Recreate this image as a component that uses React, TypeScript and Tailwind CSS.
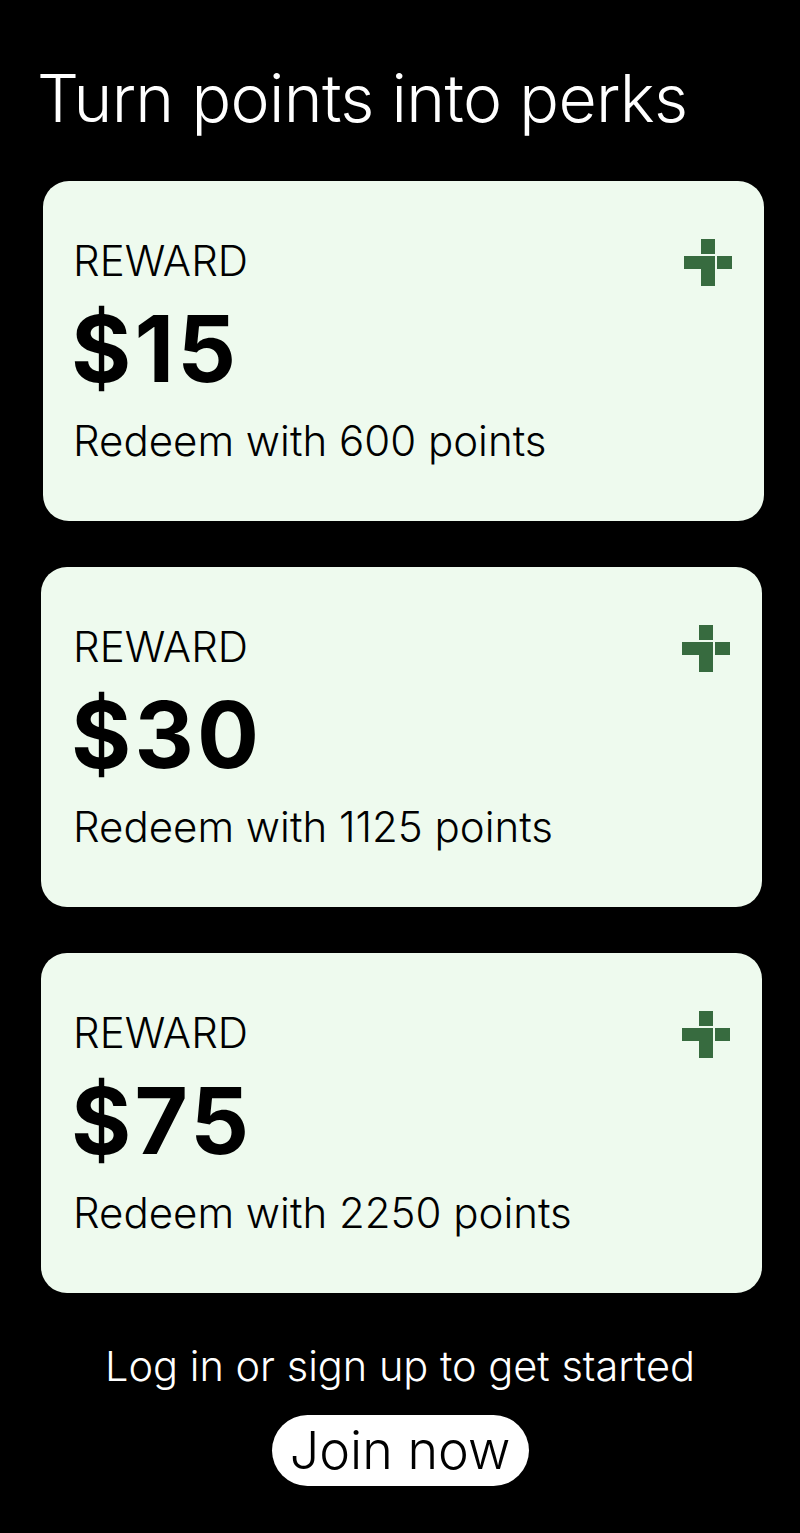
import React from "react";

const rewards = [
  { amount: "$15", points: 600, shift: "translate-x-[2px] pl-[30px]" },
  { amount: "$30", points: 1125, shift: "pl-[32px]" },
  { amount: "$75", points: 2250, shift: "pl-[32px]" },
];

function PixelPlus({ className = "" }: { className?: string }) {
  return (
    <svg viewBox="0 0 48 47" className={className} aria-hidden="true">
      <g fill="#376b3f">
        <rect x="17" y="0" width="14" height="15" />
        <rect x="0" y="17" width="31" height="13" />
        <rect x="33" y="17" width="15" height="13" />
        <rect x="17" y="30" width="14" height="17" />
      </g>
    </svg>
  );
}

function RewardCard({ amount, points, shift }: { amount: string; points: number; shift: string }) {
  return (
    <div className={`flex h-[340px] w-[721px] items-start justify-between rounded-[26px] bg-[#eefaee] pr-[32px] pt-[56px] ${shift}`}>
      <div className="flex flex-col">
        <span className="text-[42px] font-light leading-[48px] text-black">REWARD</span>
        <span className="ml-[-2px] mt-[18px] text-[92px] font-bold leading-[92px] tracking-[0.035em] text-black">
          {amount}
        </span>
        <span className="mt-[22px] text-[42px] font-light leading-[48px] text-black">
          Redeem with {points} points
        </span>
      </div>
      <PixelPlus className="mt-[2px] h-[47px] w-[48px]" />
    </div>
  );
}

export default function App() {
  return (
    <div
      className="min-h-[1533px] w-full bg-black"
      style={{ fontFamily: "Inter, 'Noto Sans', sans-serif" }}
    >
      <div className="flex flex-col px-[41px]">
        <h1 className="ml-[-4px] pt-[58px] text-[66px] font-light leading-[80px] tracking-[-0.01em] text-white">
          Turn points into perks
        </h1>
        <div className="mt-[43px] flex flex-col gap-[46px]">
          {rewards.map((r) => (
            <RewardCard key={r.amount} {...r} />
          ))}
        </div>
        <p className="mt-[49px] text-center text-[41.5px] font-light leading-[48px] text-white">
          Log in or sign up to get started
        </p>
        <div className="mt-[25px] flex justify-center">
          <button className="flex h-[71px] w-[257px] items-center justify-center rounded-full bg-white text-[52px] font-light leading-none text-black">
            Join now
          </button>
        </div>
      </div>
    </div>
  );
}
